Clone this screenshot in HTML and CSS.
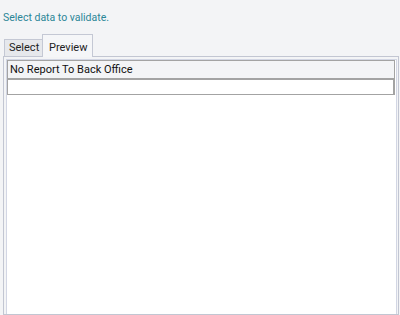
FILE: index.html
```html
<!DOCTYPE html>
<html>
<head>
<meta charset="utf-8">
<link rel="stylesheet" href="styles.css">
</head>
<body>
<div class="title">Select data to validate.</div>
<div class="tabs">
  <div class="tab tab-inactive">Select</div>
  <div class="tab tab-active">Preview</div>
</div>
<div class="panel">
  <div class="inner">
    <div class="grid">
      <div class="grid-header">No Report To Back Office</div>
      <div class="grid-row"></div>
    </div>
  </div>
</div>
</body>
</html>
```
FILE: styles.css
```css
html, body {
  margin: 0;
  padding: 0;
  background: #f3f4f6;
  font-family: "Roboto", "Open Sans", sans-serif;
  font-size: 11px;
  overflow: hidden;
  height: 315px;
}
.title {
  color: #2b8696;
  font-size: 10.5px;
  padding: 9px 0 0 3px;
  height: 34px;
  box-sizing: border-box;
  line-height: 17px;
}
.tabs {
  display: flex;
  align-items: flex-end;
  padding-left: 4px;
  height: 22px;
}
.tab {
  box-sizing: border-box;
  border: 1px solid #c4c8d4;
  border-bottom: none;
  color: #222;
  line-height: 16px;
  white-space: nowrap;
}
.tab-inactive {
  width: 38px;
  height: 17px;
  background: #e6e8ec;
  padding: 0 0 0 4px;
  border-right: none;
}
.tab-active {
  width: 51px;
  height: 23px;
  background: #f5f6f8;
  padding: 5px 0 0 6px;
  margin-bottom: -1px;
  position: relative;
  z-index: 1;
}
.panel {
  margin-left: 3px;
  width: 396px;
  box-sizing: border-box;
  border: 1px solid #c2c6d2;
  padding: 2px 1px 0 2px;
  height: 259px;
}
.inner {
  border: 1px solid #d2d6e4;
  border-bottom: none;
  background: #ffffff;
  height: 100%;
  box-sizing: border-box;
}
.grid {
  margin-right: 1px;
}
.grid-header {
  background: #f3f4f6;
  border: 1px solid #a3a3a3;
  border-bottom: 2px solid #a3a3a3;
  height: 20px;
  box-sizing: border-box;
  padding-left: 2px;
  line-height: 17px;
  color: #111;
}
.grid-row {
  border: 1px solid #a3a3a3;
  border-top: none;
  border-right-width: 2px;
  height: 15px;
  box-sizing: border-box;
  background: #fff;
}
```
